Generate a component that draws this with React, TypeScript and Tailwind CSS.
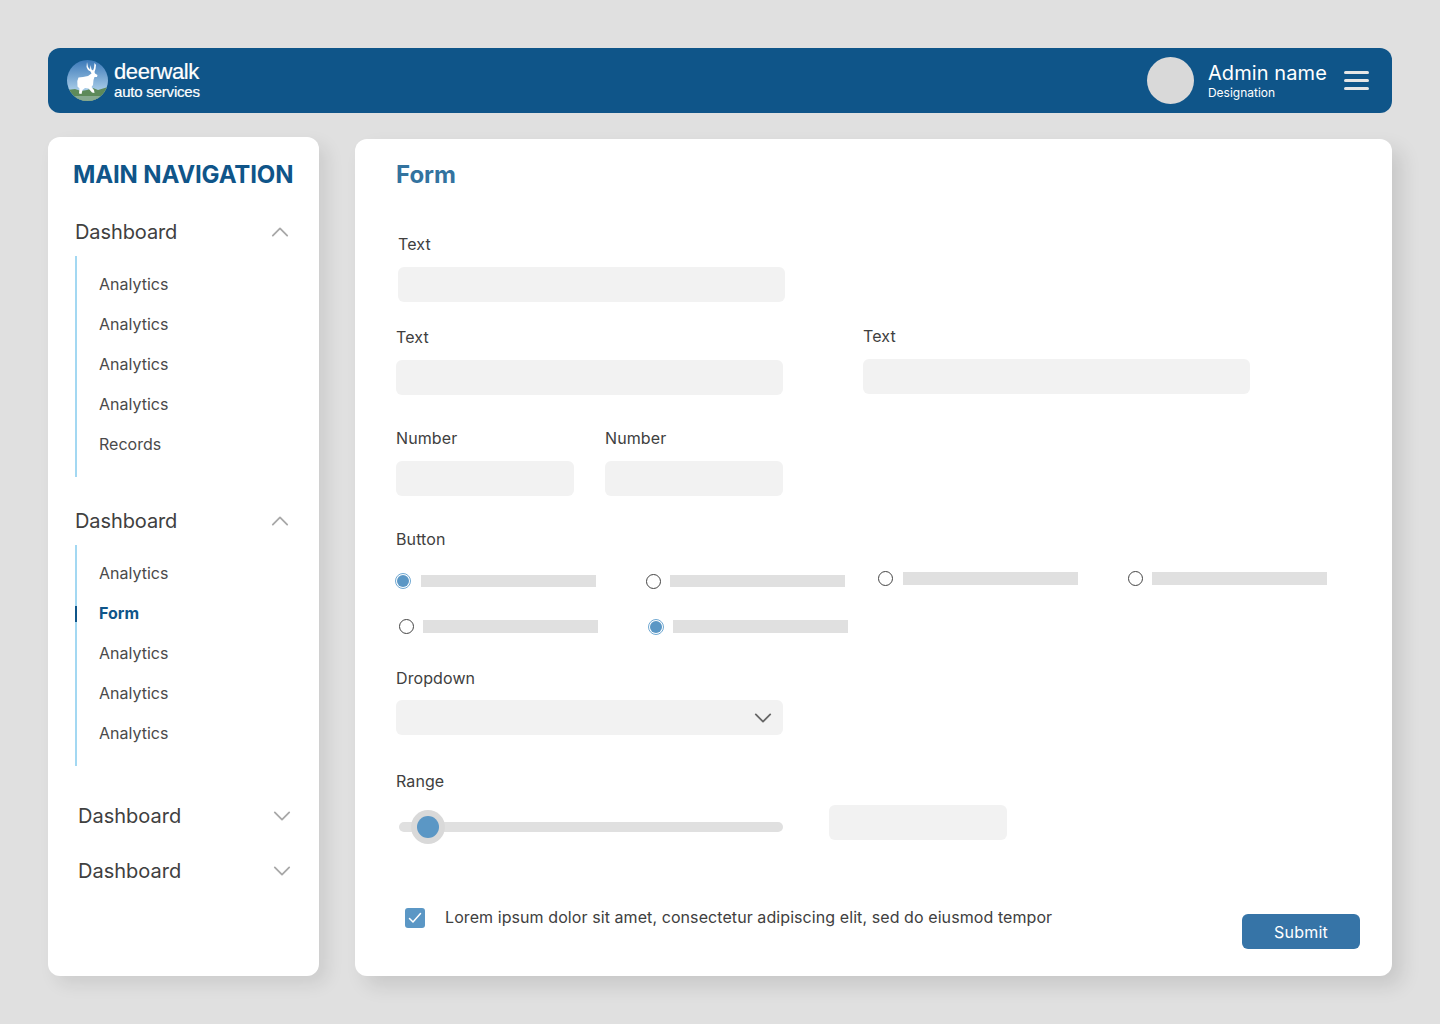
import React from "react";

const Chevron = ({ up, className }: { up?: boolean; className: string }) => (
  <svg width="18" height="10" viewBox="0 0 18 10" fill="none" className={className}>
    <path d={up ? "M1.8 8.6L9 1.4L16.2 8.6" : "M1.8 1.4L9 8.6L16.2 1.4"} stroke="currentColor" strokeWidth="1.8" strokeLinecap="round" strokeLinejoin="round" />
  </svg>
);

const Logo = () => (
  <svg width="41" height="41" viewBox="0 0 41 41" className="shrink-0">
    <defs>
      <linearGradient id="sky" x1="0" y1="0" x2="0" y2="1">
        <stop offset="0" stopColor="#3a78b8" />
        <stop offset="0.75" stopColor="#a9cde8" />
      </linearGradient>
      <clipPath id="disc">
        <circle cx="20.5" cy="20.5" r="20.5" />
      </clipPath>
    </defs>
    <g clipPath="url(#disc)">
      <rect width="41" height="41" fill="url(#sky)" />
      <path d="M0 30L8 29L14 31L20 30L26 28L31 30L41 27V41H0Z" fill="#5d8a5a" />
      <path d="M4 36H37V41H4Z" fill="#86a98f" />
      <path
        d="M20 2L21 7L23 9.5L23.5 5L24.5 9.5L26 10.5L27 8L27.5 3L29 5L28.5 9L27.5 12L28 13.5L30.5 15L30 17L27.5 17L26.5 20L26 25L24.5 27L27 30L27.5 33L25 32.5L21.5 28.5L18 28L15.5 30L14.5 34L12 33.5L12.5 28.5L10.5 26.5L10.3 21L11.5 17.5L16 17L21 16L24.5 13.5L23.5 11.5L21 10L19.5 7Z"
        fill="#fff"
      />
    </g>
  </svg>
);

const SubItem = ({ label, active }: { label: string; active?: boolean }) => (
  <div className={`relative h-10 flex items-center pl-[22px] text-base ${active ? "font-bold text-[#0f5589]" : "text-[#4a4a4a]"}`}>
    {active && <span className="absolute -left-0.5 top-[13px] h-4 w-0.5 bg-[#0f5589]" />}
    {label}
  </div>
);

const NavHead = ({ up, className }: { up?: boolean; className: string }) => (
  <div className={`flex h-7 items-center justify-between text-xl text-[#404040] ${className}`}>
    <span>Dashboard</span>
    <Chevron up={up} className="text-[#a8a8a8]" />
  </div>
);

const NavGroup = ({ items, className }: { items: { label: string; active?: boolean }[]; className: string }) => (
  <div className={className}>
    <NavHead up className="pr-[3px] tracking-[-0.1px]" />
    <div className="mt-2.5 border-l-2 border-[#a3d8f2] pt-2 pb-[13px]">
      {items.map((it, i) => (
        <SubItem key={i} label={it.label} active={it.active} />
      ))}
    </div>
  </div>
);

const Sidebar = () => (
  <aside className="w-[271px] h-[839px] shrink-0 rounded-xl bg-white pl-[25px] pr-[27px] pt-[22px] shadow-[8px_8px_18px_rgba(0,0,0,0.09)]">
    <h2 className="h-8 text-2xl font-bold leading-8 tracking-[-0.15px] text-[#0f5589] whitespace-nowrap">MAIN NAVIGATION</h2>
    <NavGroup
      className="mt-[27px] ml-0.5"
      items={[{ label: "Analytics" }, { label: "Analytics" }, { label: "Analytics" }, { label: "Analytics" }, { label: "Records" }]}
    />
    <NavGroup
      className="mt-[30px] ml-0.5"
      items={[{ label: "Analytics" }, { label: "Form", active: true }, { label: "Analytics" }, { label: "Analytics" }, { label: "Analytics" }]}
    />
    <NavHead className="mt-9 ml-[5px] pr-px" />
    <NavHead className="mt-[27px] ml-[5px] pr-px" />
  </aside>
);

const Label = ({ children }: { children: React.ReactNode }) => (
  <div className="h-6 text-base leading-6 tracking-[0.1px] text-[#404040]">{children}</div>
);

const Input = ({ className }: { className: string }) => <div className={`h-[35px] rounded-md bg-[#f2f2f2] ${className}`} />;

const Field = ({ label, width, className = "" }: { label: string; width: string; className?: string }) => (
  <div className={className}>
    <Label>{label}</Label>
    <Input className={`mt-[11px] ${width}`} />
  </div>
);

const Radio = ({ checked }: { checked?: boolean }) =>
  checked ? (
    <span className="flex h-4 w-4 shrink-0 items-center justify-center rounded-full border border-[#6fa8d2] bg-white">
      <span className="h-3 w-3 rounded-full bg-[#5b97c5]" />
    </span>
  ) : (
    <span className="my-px h-[15px] w-[15px] shrink-0 rounded-full border border-[#444] bg-white" />
  );

const Bar = () => <span className="h-[12.5px] w-[175px] shrink-0 bg-[#e0e0e0]" />;

const FormPanel = () => (
  <main className="flex-1 h-[837px] mt-0.5 rounded-xl bg-white pl-[41px] pr-8 pt-5 shadow-[10px_10px_20px_rgba(0,0,0,0.11)]">
    <h1 className="h-8 text-2xl font-bold leading-8 text-[#33739f]">Form</h1>

    <Field label="Text" width="w-[387px]" className="mt-[41px] ml-0.5" />

    <div className="mt-[23px] flex items-start gap-20">
      <Field label="Text" width="w-[387px]" />
      <Field label="Text" width="w-[387px]" className="-mt-px" />
    </div>

    <div className="mt-[31px] flex gap-[31px]">
      <Field label="Number" width="w-[178px]" />
      <Field label="Number" width="w-[178px]" />
    </div>

    <div className="mt-[31px]">
      <Label>Button</Label>
    </div>
    <div className="mt-[22px] -ml-px flex h-4 items-center">
      <div className="flex items-center gap-2.5">
        <Radio checked />
        <Bar />
      </div>
      <div className="ml-[50px] flex items-center gap-[9px]">
        <Radio />
        <Bar />
      </div>
      <div className="ml-[33px] -mt-[5px] flex items-center gap-2.5">
        <Radio />
        <Bar />
      </div>
      <div className="ml-[50px] -mt-[5px] flex items-center gap-[9px]">
        <Radio />
        <Bar />
      </div>
    </div>
    <div className="mt-[29.5px] ml-[3px] flex h-4 items-center">
      <div className="flex items-center gap-[9px]">
        <Radio />
        <Bar />
      </div>
      <div className="ml-[50px] flex items-center gap-[9px]">
        <Radio checked />
        <Bar />
      </div>
    </div>

    <div className="mt-[31.5px]">
      <Label>Dropdown</Label>
      <div className="mt-2.5 flex h-[35px] w-[387px] items-center justify-end rounded-md bg-[#f2f2f2] pr-[11px]">
        <Chevron className="text-[#666]" />
      </div>
    </div>

    <div className="mt-[34px]">
      <Label>Range</Label>
      <div className="mt-3 flex items-start">
        <div className="relative mt-[17px] ml-[3px] h-2.5 w-[384px] rounded-full bg-[#e0e0e0]">
          <span className="absolute left-3 -top-3 flex h-[34px] w-[34px] items-center justify-center rounded-full bg-[#d9d9d9]">
            <span className="h-[22px] w-[22px] rounded-full bg-[#5b97c5]" />
          </span>
        </div>
        <Input className="ml-[46px] w-[178px]" />
      </div>
    </div>

    <div className="mt-[68px] flex items-start justify-between">
      <div className="ml-[9px] flex items-start gap-5">
        <span className="flex h-5 w-5 items-center justify-center rounded-[3px] bg-[#5b97c5]">
          <svg width="14" height="12" viewBox="0 0 14 12" fill="none">
            <path d="M1.5 6.5L5 10L12.5 1.5" stroke="#fff" strokeWidth="1.5" strokeLinecap="round" strokeLinejoin="round" />
          </svg>
        </span>
        <span className="-mt-[3px] text-base leading-6 tracking-[0.08px] text-[#404040]">
          Lorem ipsum dolor sit amet, consectetur adipiscing elit, sed do eiusmod tempor
        </span>
      </div>
      <button className="mt-1.5 h-[35px] w-[118px] rounded-md bg-[#3674a7] text-base tracking-[0.2px] text-white">Submit</button>
    </div>
  </main>
);

export default function App() {
  return (
    <div className="min-h-[1024px] bg-[#e0e0e0] px-12 pt-12 font-['Inter',sans-serif]">
      <header className="flex h-[65px] items-center justify-between rounded-xl bg-[#0f5589] pl-[19px] pr-[23px] text-white">
        <div className="flex items-center gap-1.5">
          <Logo />
          <div className="font-['Liberation_Sans',sans-serif] [-webkit-text-stroke:0.2px_white]">
            <div className="text-[22px] leading-6 tracking-[-0.4px]">deerwalk</div>
            <div className="-mt-px text-[15px] leading-[18px] tracking-[-0.2px]">auto services</div>
          </div>
        </div>
        <div className="flex items-center">
          <div className="h-[47px] w-[47px] rounded-full bg-[#d9d9d9]" />
          <div className="ml-3.5">
            <div className="text-xl leading-6 tracking-[0.1px]">Admin name</div>
            <div className="text-xs leading-4">Designation</div>
          </div>
          <div className="ml-[17px] flex w-[25px] flex-col gap-[5px]">
            <span className="h-[3px] rounded-full bg-[#e6e6e6]" />
            <span className="h-[3px] rounded-full bg-[#e6e6e6]" />
            <span className="h-[3px] rounded-full bg-[#e6e6e6]" />
          </div>
        </div>
      </header>
      <div className="mt-6 flex items-start gap-9">
        <Sidebar />
        <FormPanel />
      </div>
    </div>
  );
}
